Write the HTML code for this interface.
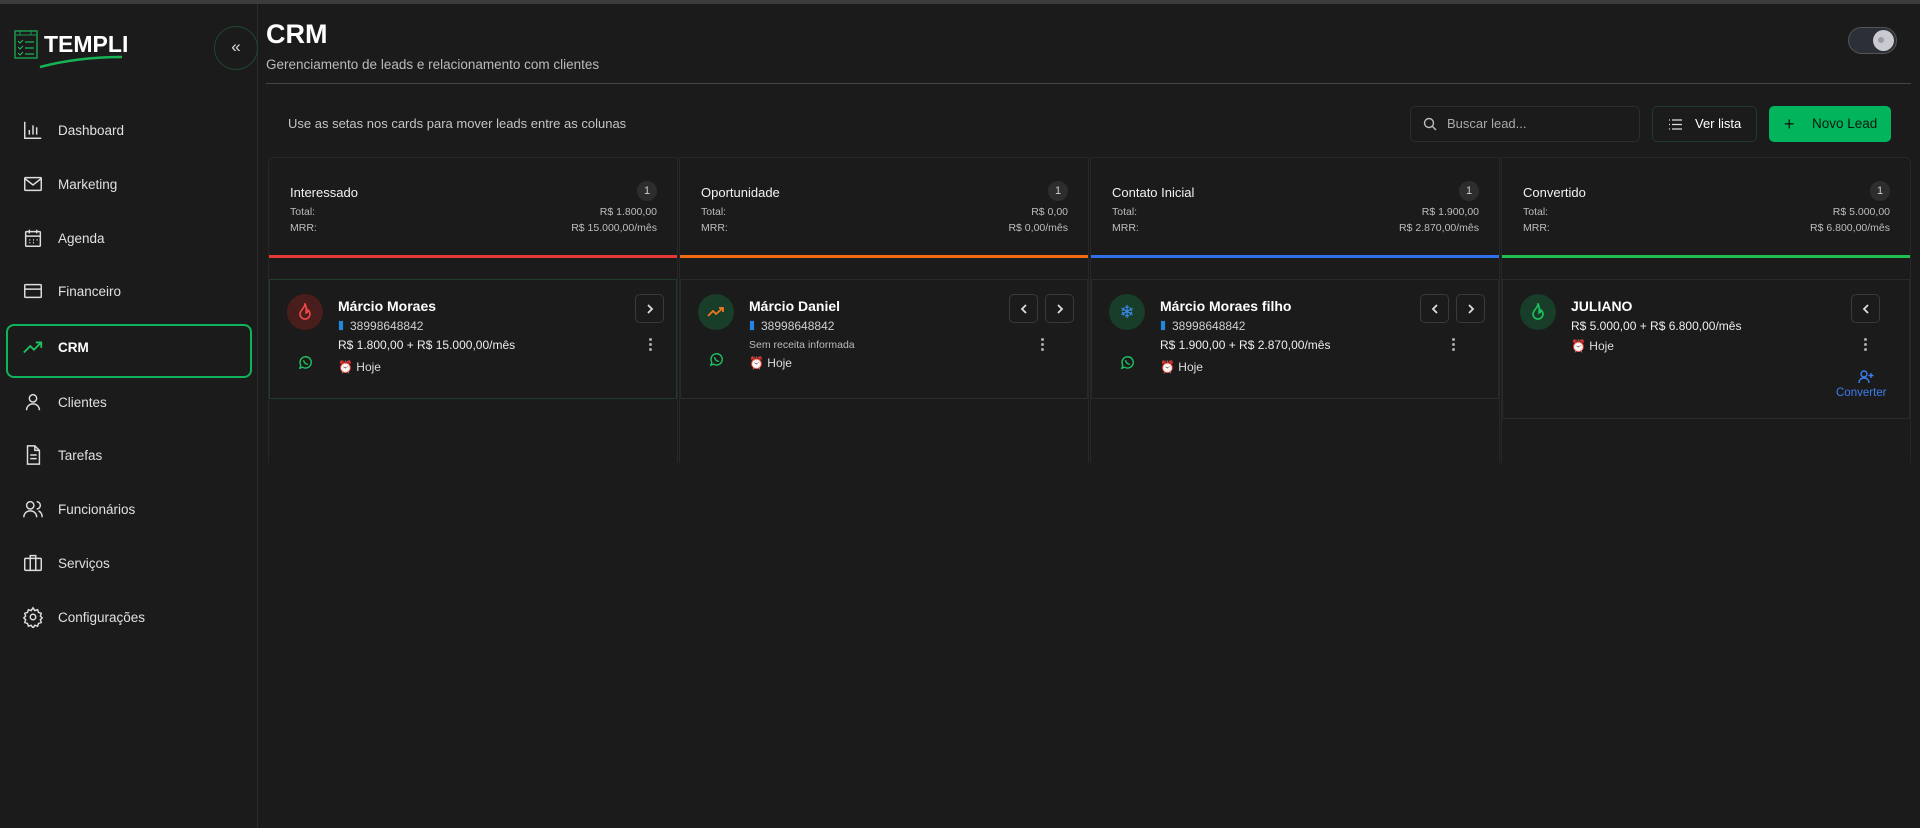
<!DOCTYPE html>
<html><head><meta charset="utf-8"><style>
*{box-sizing:border-box;margin:0;padding:0}
body{width:1920px;height:828px;background:#1b1b1b;font-family:"Liberation Sans",sans-serif;color:#e8e8e8;position:relative;overflow:hidden}
.topbar{position:absolute;left:0;top:0;width:1920px;height:4px;background:#3c3c3c}
.side{position:absolute;left:0;top:4px;width:258px;height:824px;border-right:1px solid #2c2c2c;background:#1b1b1b}
.nav{position:absolute;left:22px;width:230px;height:30px;display:flex;align-items:center;font-size:13.5px;color:#e0e0e0}
.nav svg{width:22px;height:22px;margin-left:0;margin-right:14px;flex:none}
.crm{position:absolute;left:6px;top:320px;width:246px;height:54px;border:2.5px solid #0fb45a;border-radius:8px}
.abs{position:absolute}
.col{position:absolute;top:157px;width:410px;height:306px;border:1px solid #272727;border-bottom:none}
.ch{position:absolute;left:0;right:0;top:0;height:101px}
.ch .t{position:absolute;left:21px;top:27px;font-size:13px;color:#f2f2f2}
.ch .l1,.ch .l2{position:absolute;left:21px;font-size:10.5px;color:#bdbdbd}
.ch .l1{top:48px}.ch .l2{top:64px}
.ch .r1,.ch .r2{position:absolute;right:20px;font-size:10.5px;color:#bdbdbd}
.ch .r1{top:48px}.ch .r2{top:64px}
.badge{position:absolute;right:20px;top:23px;width:20px;height:20px;border-radius:50%;background:#2d2d2d;color:#ccc;font-size:11px;text-align:center;line-height:20px}
.bar{position:absolute;left:0;right:0;top:97px;height:3px}
.card{position:absolute;left:0;right:0;top:121px;height:120px;border:1px solid #2a2a2a}
.av{position:absolute;left:17px;top:14px;width:36px;height:36px;border-radius:50%;display:flex;align-items:center;justify-content:center}
.nm{position:absolute;left:68px;top:18px;font-size:14px;font-weight:bold;color:#fff}
.ph{position:absolute;left:68px;top:39px;font-size:12px;color:#cfcfcf}
.pr{position:absolute;left:68px;top:58px;font-size:12px;color:#eee}
.hj{position:absolute;left:68px;top:80px;font-size:12px;color:#ddd}
.btn{position:absolute;top:14px;width:29px;height:29px;border:1px solid #3a3a3a;border-radius:5px;display:flex;align-items:center;justify-content:center}
.keb{position:absolute;top:58px;width:4px;font-size:0}
.keb i{display:block;width:3px;height:3px;border-radius:50%;background:#aaa;margin-bottom:2px}
.wa{position:absolute;left:28px;top:75px}
.phi{display:inline-block;width:6px;height:11px;background:#1e88e5;border:1px solid #222;vertical-align:-1px;margin-right:6px;border-radius:1px}
</style></head><body>
<div class="topbar"></div>
<div class="side">
  <svg class="abs" style="left:14px;top:26px" width="24" height="30" viewBox="0 0 24 30"><rect x="1" y="1" width="22" height="27" fill="none" stroke="#1a9a4c" stroke-width="1.5"/><line x1="1" y1="5" x2="23" y2="5" stroke="#1a9a4c"/><line x1="6" y1="0" x2="6" y2="5" stroke="#1a9a4c"/><line x1="17" y1="0" x2="17" y2="5" stroke="#1a9a4c"/><path d="M4 11l2 2 3-3M4 17l2 2 3-3M4 23l2 2 3-3" stroke="#1fc260" fill="none"/><path d="M11 12h9M11 18h9M11 24h9" stroke="#1a9a4c" stroke-width="1.4"/></svg>
  <div class="abs" style="left:44px;top:27px;font-size:23px;font-weight:bold;color:#fff;letter-spacing:0px">TEMPLI</div>
  <svg class="abs" style="left:38px;top:50px" width="86" height="16"><path d="M2 13 Q40 3 84 3" stroke="#16b455" stroke-width="2.5" fill="none"/></svg>
  <div class="abs" style="left:214px;top:22px;width:44px;height:44px;border-radius:50%;border:1px solid #1e4a2e;color:#ddd;font-size:17px;text-align:center;line-height:40px">«</div>
  <div class="nav" style="top:111px"><svg viewBox="0 0 24 24" fill="none" stroke="#ddd" stroke-width="1.6"><path d="M3 3v18h18M8 17v-5M12 17V7M16 17v-8"/></svg>Dashboard</div>
  <div class="nav" style="top:165px"><svg viewBox="0 0 24 24" fill="none" stroke="#ddd" stroke-width="1.6"><rect x="3" y="5" width="18" height="14" rx="1"/><path d="M3 6l9 7 9-7"/></svg>Marketing</div>
  <div class="nav" style="top:219px"><svg viewBox="0 0 24 24" fill="none" stroke="#ddd" stroke-width="1.6"><rect x="4" y="5" width="16" height="16" rx="1"/><path d="M4 10h16M8 3v4M16 3v4M8 14h1M12 14h1M16 14h1M8 17h1M12 17h1"/></svg>Agenda</div>
  <div class="nav" style="top:272px"><svg viewBox="0 0 24 24" fill="none" stroke="#ddd" stroke-width="1.6"><rect x="3" y="5" width="18" height="14" rx="1"/><path d="M3 10h18"/></svg>Financeiro</div>
  <div class="crm"></div>
  <div class="nav" style="top:328px;font-weight:bold;color:#fff"><svg viewBox="0 0 24 24" fill="none" stroke="#1fc260" stroke-width="2"><path d="M2 18l7-7 4 4 8-8M15 7h6v6"/></svg>CRM</div>
  <div class="nav" style="top:383px"><svg viewBox="0 0 24 24" fill="none" stroke="#ddd" stroke-width="1.6"><circle cx="12" cy="8" r="4"/><path d="M5 21c0-4 3-7 7-7s7 3 7 7"/></svg>Clientes</div>
  <div class="nav" style="top:436px"><svg viewBox="0 0 24 24" fill="none" stroke="#ddd" stroke-width="1.6"><path d="M6 2h8l5 5v15H6zM14 2v5h5M9 12h7M9 16h7"/></svg>Tarefas</div>
  <div class="nav" style="top:490px"><svg viewBox="0 0 24 24" fill="none" stroke="#ddd" stroke-width="1.6"><circle cx="9" cy="8" r="4"/><path d="M2 21c0-4 3-7 7-7s7 3 7 7M16 4a4 4 0 010 8M18 14c2 1 4 3 4 7"/></svg>Funcionários</div>
  <div class="nav" style="top:544px"><svg viewBox="0 0 24 24" fill="none" stroke="#ddd" stroke-width="1.6"><rect x="3" y="7" width="18" height="13" rx="1"/><path d="M9 7V4h6v3M9 7v13M15 7v13"/></svg>Serviços</div>
  <div class="nav" style="top:598px"><svg viewBox="0 0 24 24" fill="none" stroke="#ddd" stroke-width="1.6"><circle cx="12" cy="12" r="3"/><path d="M12 2l2 3 3-1 1 3 3 1-1 3 2 2-2 2 1 3-3 1-1 3-3-1-2 3-2-3-3 1-1-3-3-1 1-3-2-2 2-2-1-3 3-1 1-3 3 1z"/></svg>Configurações</div>
</div>

<div class="abs" style="left:266px;top:19px;font-size:27px;font-weight:bold;color:#fff">CRM</div>
<div class="abs" style="left:266px;top:57px;font-size:13.5px;color:#bbb">Gerenciamento de leads e relacionamento com clientes</div>
<div class="abs" style="left:266px;top:83px;width:1645px;height:1px;background:#444"></div>
<div class="abs" style="left:1848px;top:27px;width:49px;height:27px;border-radius:14px;background:#2c2f38;border:1px solid #555"><div style="position:absolute;right:2px;top:2px;width:21px;height:21px;border-radius:50%;background:#c9cbd1"><div style="position:absolute;left:5px;top:7px;width:6px;height:6px;border-radius:50%;background:#9a9ca4"></div></div></div>

<div class="abs" style="left:288px;top:116px;font-size:13px;color:#c4c4c4">Use as setas nos cards para mover leads entre as colunas</div>
<div class="abs" style="left:1410px;top:106px;width:230px;height:36px;border:1px solid #2d2d2d;border-radius:5px;font-size:13px;color:#aaa;line-height:34px;padding-left:36px">Buscar lead...<svg class="abs" style="left:12px;top:10px" width="14" height="14" viewBox="0 0 14 14" fill="none" stroke="#bbb" stroke-width="1.4"><circle cx="6" cy="6" r="4.5"/><path d="M9.5 9.5L13 13"/></svg></div>
<div class="abs" style="left:1652px;top:106px;width:105px;height:36px;border:1px solid #1f3a2a;border-radius:5px;font-size:13px;color:#fff;line-height:34px;padding-left:42px">Ver lista<svg class="abs" style="left:16px;top:12px" width="13" height="11" viewBox="0 0 13 11" stroke="#ddd" stroke-width="1.3"><path d="M0 1h1M3 1h10M0 5.5h1M3 5.5h10M0 10h1M3 10h10"/></svg></div>
<div class="abs" style="left:1769px;top:106px;width:122px;height:36px;background:#02b55c;border-radius:5px;font-size:13.5px;color:#0b1a10;line-height:36px;padding-left:43px">Novo Lead<span style="position:absolute;left:15px;top:0;font-size:18px">+</span></div>

<div class="col" style="left:268px;border-radius:6px 0 0 0">
  <div class="ch"><div class="t">Interessado</div><div class="badge">1</div><div class="l1">Total:</div><div class="l2">MRR:</div><div class="r1">R$ 1.800,00</div><div class="r2">R$ 15.000,00/mês</div><div class="bar" style="background:#e53935"></div></div>
  <div class="card" style="border-color:#1f3d2a">
    <div class="av" style="background:#4a1d1d"><svg width="16" height="18" viewBox="0 0 16 18" fill="none" stroke="#f04848" stroke-width="1.6"><path d="M8 1c0 4-5 6-5 10a5 5 0 0010 0c0-2-1-3-2-4 0 2-1 3-2 3 0-3 1-6-1-9z"/></svg></div>
    <div class="nm">Márcio Moraes</div><div class="ph"><span class="phi"></span>38998648842</div>
    <div class="pr">R$ 1.800,00 + R$ 15.000,00/mês</div><div class="hj">⏰ Hoje</div>
    <div class="wa"><svg width="15" height="15" viewBox="0 0 16 16" fill="none" stroke="#1fc260" stroke-width="1.5"><path d="M2 14l1-3a6 6 0 112 2z"/><path d="M6 5.5c0 2 2 4.5 4.5 4.5"/></svg></div>
    <div class="btn" style="left:365px"><svg width="8" height="10"><path d="M2 1l4 4-4 4" stroke="#ddd" stroke-width="1.8" fill="none"/></svg></div>
    <div class="keb" style="left:379px"><i></i><i></i><i></i></div>
  </div>
</div>
<div class="col" style="left:679px">
  <div class="ch"><div class="t">Oportunidade</div><div class="badge">1</div><div class="l1">Total:</div><div class="l2">MRR:</div><div class="r1">R$ 0,00</div><div class="r2">R$ 0,00/mês</div><div class="bar" style="background:#f26a12"></div></div>
  <div class="card">
    <div class="av" style="background:#183d29"><svg width="18" height="12" viewBox="0 0 18 12" fill="none" stroke="#f07a20" stroke-width="1.7"><path d="M1 10l5-5 3 3 7-6M12 2h4v4"/></svg></div>
    <div class="nm">Márcio Daniel</div><div class="ph"><span class="phi"></span>38998648842</div>
    <div class="pr" style="font-size:10.5px;color:#bbb;top:59px">Sem receita informada</div><div class="hj" style="top:76px">⏰ Hoje</div>
    <div class="wa" style="top:72px"><svg width="15" height="15" viewBox="0 0 16 16" fill="none" stroke="#1fc260" stroke-width="1.5"><path d="M2 14l1-3a6 6 0 112 2z"/><path d="M6 5.5c0 2 2 4.5 4.5 4.5"/></svg></div>
    <div class="btn" style="left:328px"><svg width="8" height="10"><path d="M6 1L2 5l4 4" stroke="#ddd" stroke-width="1.8" fill="none"/></svg></div>
    <div class="btn" style="left:364px"><svg width="8" height="10"><path d="M2 1l4 4-4 4" stroke="#ddd" stroke-width="1.8" fill="none"/></svg></div>
    <div class="keb" style="left:360px"><i></i><i></i><i></i></div>
  </div>
</div>
<div class="col" style="left:1090px">
  <div class="ch"><div class="t">Contato Inicial</div><div class="badge">1</div><div class="l1">Total:</div><div class="l2">MRR:</div><div class="r1">R$ 1.900,00</div><div class="r2">R$ 2.870,00/mês</div><div class="bar" style="background:#2f6fe8"></div></div>
  <div class="card">
    <div class="av" style="background:#183d29;color:#3b8df0;font-size:18px">❄</div>
    <div class="nm">Márcio Moraes filho</div><div class="ph"><span class="phi"></span>38998648842</div>
    <div class="pr">R$ 1.900,00 + R$ 2.870,00/mês</div><div class="hj">⏰ Hoje</div>
    <div class="wa"><svg width="15" height="15" viewBox="0 0 16 16" fill="none" stroke="#1fc260" stroke-width="1.5"><path d="M2 14l1-3a6 6 0 112 2z"/><path d="M6 5.5c0 2 2 4.5 4.5 4.5"/></svg></div>
    <div class="btn" style="left:328px"><svg width="8" height="10"><path d="M6 1L2 5l4 4" stroke="#ddd" stroke-width="1.8" fill="none"/></svg></div>
    <div class="btn" style="left:364px"><svg width="8" height="10"><path d="M2 1l4 4-4 4" stroke="#ddd" stroke-width="1.8" fill="none"/></svg></div>
    <div class="keb" style="left:360px"><i></i><i></i><i></i></div>
  </div>
</div>
<div class="col" style="left:1501px;border-radius:0 6px 0 0">
  <div class="ch"><div class="t">Convertido</div><div class="badge">1</div><div class="l1">Total:</div><div class="l2">MRR:</div><div class="r1">R$ 5.000,00</div><div class="r2">R$ 6.800,00/mês</div><div class="bar" style="background:#1fbf4f"></div></div>
  <div class="card" style="height:140px">
    <div class="av" style="background:#183d29"><svg width="16" height="18" viewBox="0 0 16 18" fill="none" stroke="#1fc260" stroke-width="1.6"><path d="M8 1c0 4-5 6-5 10a5 5 0 0010 0c0-2-1-3-2-4 0 2-1 3-2 3 0-3 1-6-1-9z"/></svg></div>
    <div class="nm">JULIANO</div>
    <div class="pr" style="top:39px">R$ 5.000,00 + R$ 6.800,00/mês</div><div class="hj" style="top:59px">⏰ Hoje</div>
    <div class="btn" style="left:348px"><svg width="8" height="10"><path d="M6 1L2 5l4 4" stroke="#ddd" stroke-width="1.8" fill="none"/></svg></div>
    <div class="keb" style="left:361px"><i></i><i></i><i></i></div>
    <svg class="abs" style="left:355px;top:90px" width="16" height="14" viewBox="0 0 16 14" fill="none" stroke="#3b7ff0" stroke-width="1.4"><circle cx="6" cy="4" r="3"/><path d="M1 13c0-3 2-5 5-5s5 2 5 5M13 3v5M10.5 5.5h5"/></svg>
    <div class="abs" style="left:333px;top:107px;font-size:11.5px;color:#3b7ff0">Converter</div>
  </div>
</div>
</body></html>
